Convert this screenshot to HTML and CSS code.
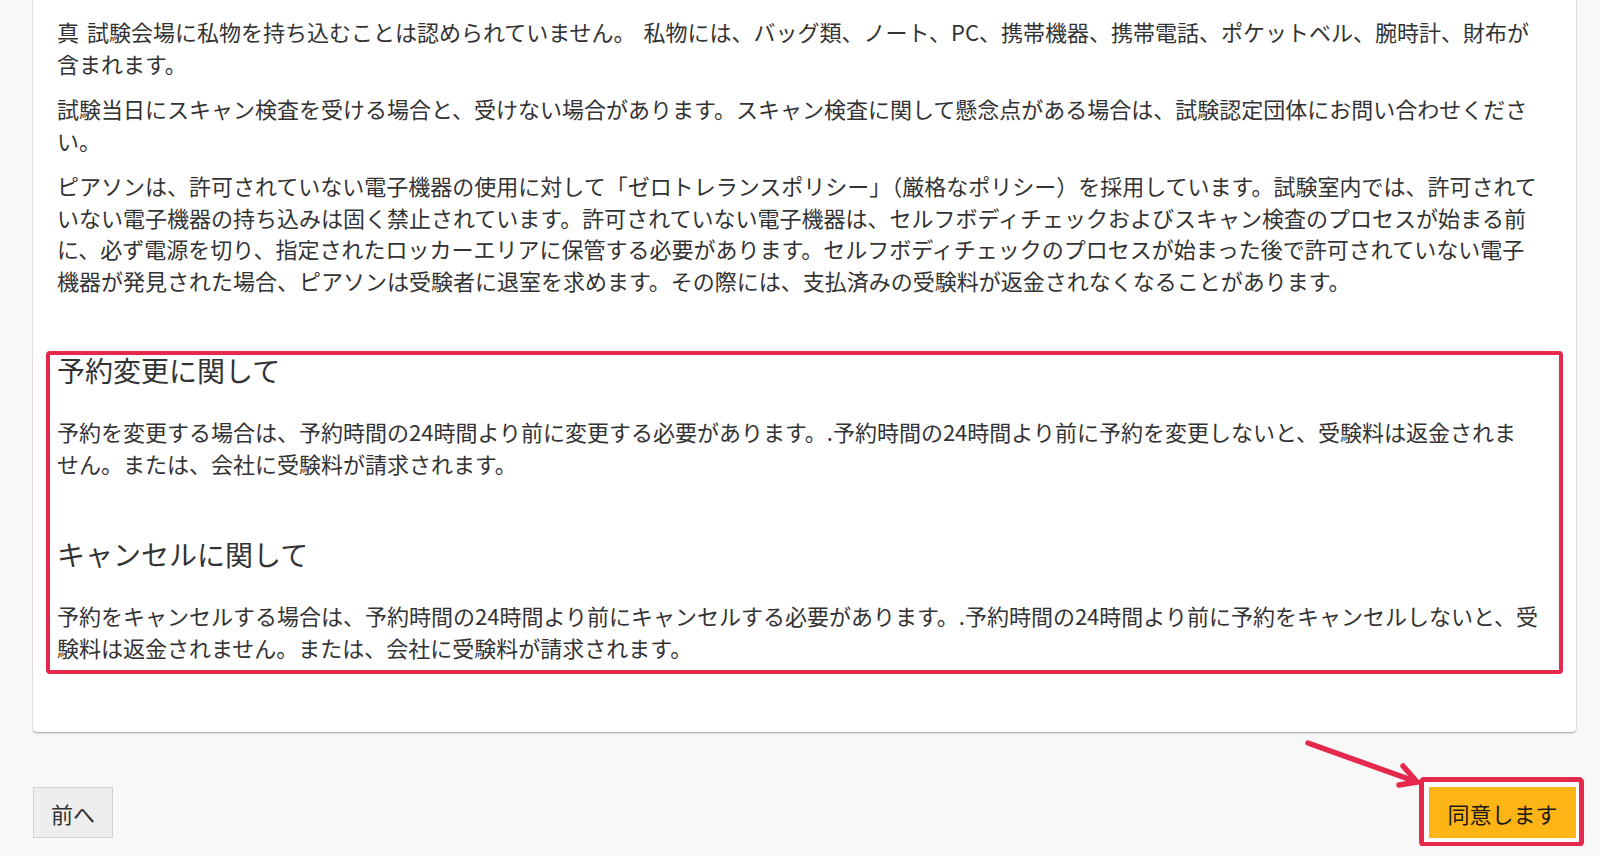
FILE: index.html
```html
<!DOCTYPE html>
<html lang="ja">
<head>
<meta charset="utf-8">
<title>同意事項</title>
<link rel="stylesheet" href="styles.css">
</head>
<body>
<div class="page">
  <div class="card">
    <p class="spaced">真 試験会場に私物を持ち込むことは認められていません。 私物には、バッグ類、ノート、PC、携帯機器、携帯電話、ポケットベル、腕時計、財布が<br>含まれます。</p>
    <p>試験当日にスキャン検査を受ける場合と、受けない場合があります。スキャン検査に関して懸念点がある場合は、試験認定団体にお問い合わせくださ<br>い。</p>
    <p>ピアソンは、許可されていない電子機器の使用に対して「ゼロトレランスポリシー」（厳格なポリシー）を採用しています。試験室内では、許可されて<br>いない電子機器の持ち込みは固く禁止されています。許可されていない電子機器は、セルフボディチェックおよびスキャン検査のプロセスが始まる前<br>に、必ず電源を切り、指定されたロッカーエリアに保管する必要があります。セルフボディチェックのプロセスが始まった後で許可されていない電子<br>機器が発見された場合、ピアソンは受験者に退室を求めます。その際には、支払済みの受験料が返金されなくなることがあります。</p>
    <div class="notice">
      <h4 class="notice-title">予約変更に関して</h4>
      <p class="notice-text">予約を変更する場合は、予約時間の24時間より前に変更する必要があります。.予約時間の24時間より前に予約を変更しないと、受験料は返金されま<br>せん。または、会社に受験料が請求されます。</p>
      <h4 class="notice-title">キャンセルに関して</h4>
      <p class="notice-text">予約をキャンセルする場合は、予約時間の24時間より前にキャンセルする必要があります。.予約時間の24時間より前に予約をキャンセルしないと、受<br>験料は返金されません。または、会社に受験料が請求されます。</p>
    </div>
  </div>
  <div class="actions">
    <button class="btn btn-prev" type="button">前へ</button>
    <div class="highlight">
      <button class="btn btn-agree" type="button">同意します</button>
    </div>
  </div>
  <svg class="arrow" width="130" height="60" viewBox="0 0 130 60" aria-hidden="true">
    <path d="M8 8 L117 47" fill="none" stroke="#e5284b" stroke-width="5.5" stroke-linecap="round"/>
    <path d="M103 31 L117 47 L99 50" fill="none" stroke="#e5284b" stroke-width="5.5" stroke-linecap="round" stroke-linejoin="round"/>
  </svg>
</div>
</body>
</html>
```

FILE: styles.css
```css
html, body {
  margin: 0;
  padding: 0;
  background: #f8f8f8;
}

body {
  font-family: "Noto Sans CJK JP", "Noto Sans", sans-serif;
  color: #333333;
  font-size: 22px;
  line-height: 31.5px;
  overflow: hidden;
}

.page {
  position: relative;
  height: 856px;
  padding: 0 24px 0 33px;
  box-sizing: border-box;
}

.card {
  background: #ffffff;
  margin-top: -10px;
  padding: 26px 19px 58px 24px;
  border-radius: 4px;
  box-shadow: 0 1px 2px rgba(0, 0, 0, 0.35), 0 0 1px rgba(0, 0, 0, 0.12);
}

.card p {
  margin: 0 0 14px 0;
  white-space: nowrap;
}

.spaced {
  word-spacing: 3px;
}

.notice {
  margin: 55px -6px 0 -11px;
  padding: 0 2px 7px 7px;
  border: 4px solid #e5284b;
  border-radius: 4px;
}

.notice-title {
  margin: 0 0 30px 0;
  font-size: 28px;
  line-height: 31px;
  font-weight: 400;
  color: #333333;
}

.card .notice-text {
  margin: 0;
}

.notice-text + .notice-title {
  margin-top: 60px;
}

.actions {
  margin-top: 45px;
  display: flex;
  justify-content: space-between;
  align-items: flex-start;
}

.btn {
  font-family: "Noto Sans CJK JP", "Noto Sans", sans-serif;
  font-size: 22px;
  line-height: 1;
  height: 51px;
  box-sizing: border-box;
  cursor: pointer;
  padding: 0;
}

.btn-prev {
  margin-top: 10px;
  width: 80px;
  background: #eeeeee;
  border: 1px solid #d2d2d2;
  color: #333333;
  border-radius: 0;
}

.highlight {
  margin-right: -8px;
  padding: 5px 3px 4px 5px;
  border: 5px solid #e5284b;
  border-radius: 5px;
  background: #ffffff;
  display: flex;
}

.btn-agree {
  width: 147px;
  background: #fdb515;
  border: none;
  color: #1a1a1a;
}

.arrow {
  position: absolute;
  left: 1300px;
  top: 745px;
}
```
